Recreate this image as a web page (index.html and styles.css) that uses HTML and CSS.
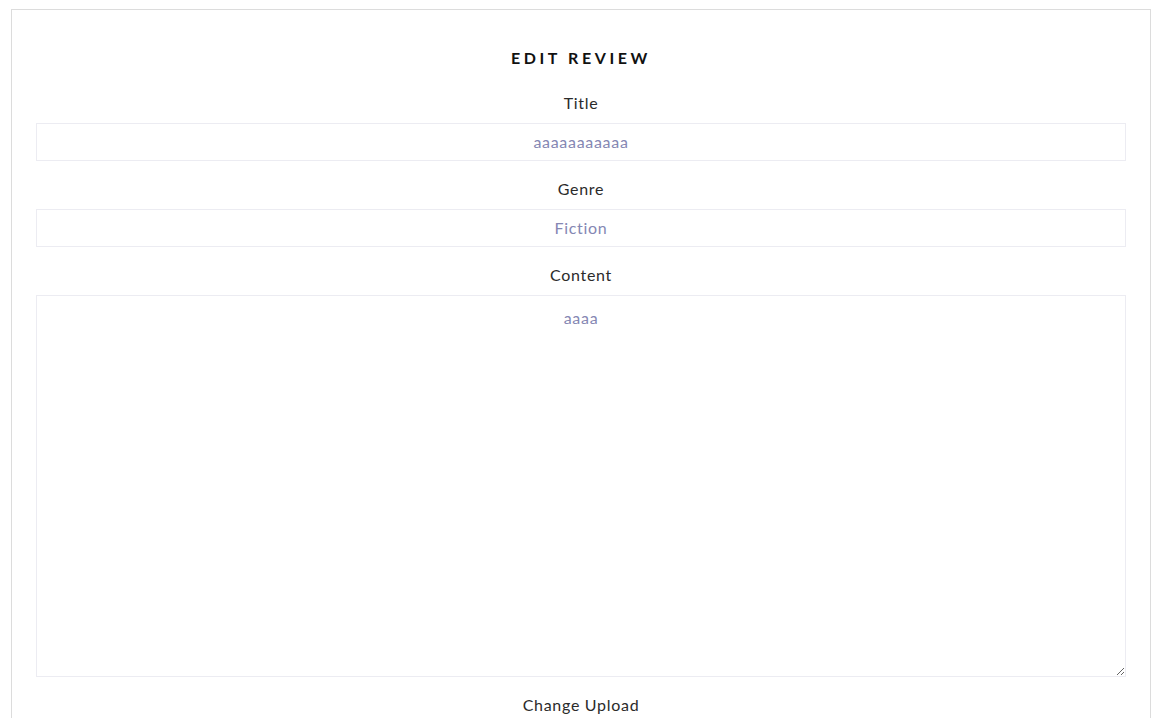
FILE: index.html
```html
<!DOCTYPE html>
<html>
<head>
<meta charset="utf-8">
<link rel="stylesheet" href="styles.css">
</head>
<body>
<div class="card">
  <h2 class="heading">EDIT REVIEW</h2>
  <form class="form">
    <label class="label">Title</label>
    <input class="field" type="text" value="aaaaaaaaaaa">
    <label class="label">Genre</label>
    <input class="field" type="text" value="Fiction">
    <label class="label">Content</label>
    <textarea class="field area">aaaa</textarea>
    <label class="label">Change Upload</label>
  </form>
</div>
</body>
</html>
```
FILE: styles.css
```css
html, body {
  margin: 0;
  padding: 0;
  background: #fff;
  overflow: hidden;
}
body {
  font-family: "Lato", "Open Sans", sans-serif;
  color: #333;
}
.card {
  margin: 9px 13px 0 11px;
  border: 1px solid #dcdcdc;
  border-bottom: none;
  padding: 36px 24px 40px;
  height: 800px;
}
.heading {
  margin: 0 0 21px;
  height: 24px;
  line-height: 24px;
  text-align: center;
  font-size: 16px;
  font-weight: 700;
  letter-spacing: 3.6px;
  color: #111;
}
.form {
  display: flex;
  flex-direction: column;
}
.label {
  display: block;
  text-align: center;
  font-size: 16px;
  line-height: 24px;
  letter-spacing: 0.7px;
  margin-bottom: 8px;
  color: #2b2b2b;
}
.field {
  box-sizing: border-box;
  width: 100%;
  height: 38px;
  margin: 0 0 16px;
  border: 1px solid #ececf2;
  border-radius: 0;
  outline: none;
  padding: 5px 12px 7px;
  font-family: inherit;
  font-size: 16px;
  line-height: 24px;
  letter-spacing: 0.7px;
  text-align: center;
  color: #8587b3;
  background: #fff;
}
.area {
  height: 382px;
  padding-top: 10px;
  resize: vertical;
  display: block;
}
```
